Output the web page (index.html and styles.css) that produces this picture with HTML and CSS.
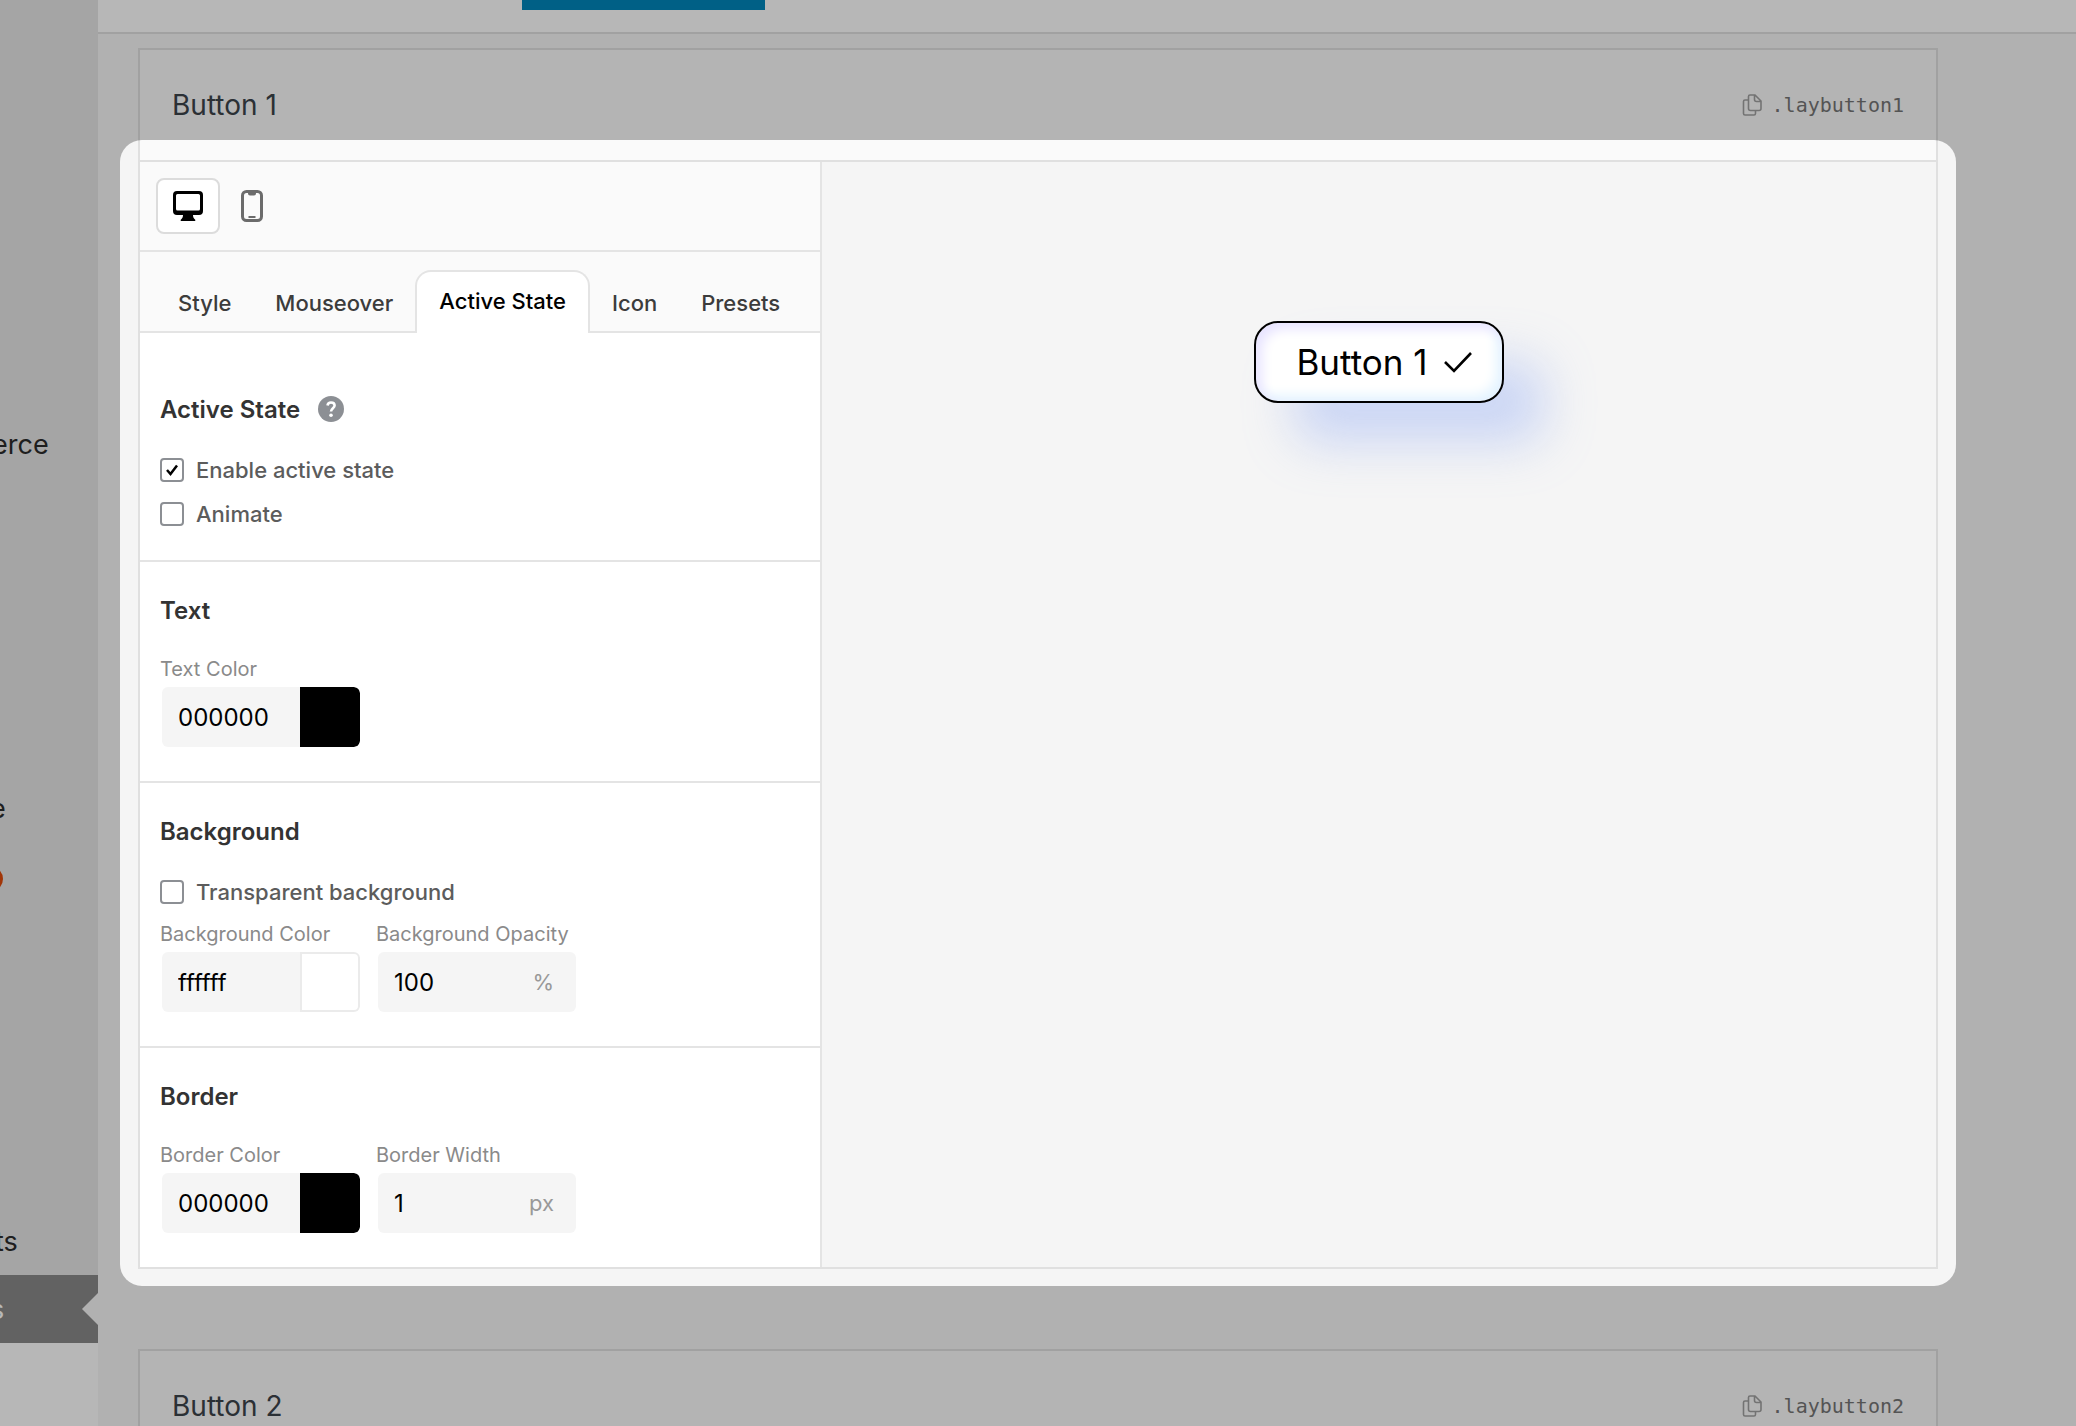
FILE: index.html
```html
<!DOCTYPE html>
<html lang="en">
<head>
  <meta charset="UTF-8">
  <meta name="viewport" content="width=device-width, initial-scale=1.0">
  <title>Buttons</title>
  <link rel="stylesheet" href="styles.css">
</head>
<body>

<svg class="sprite" aria-hidden="true">
  <symbol id="icon-copy" viewBox="0 0 20 22">
    <path stroke-width="1.600" d="M8 1h5l6 6v7.500a2 2 0 0 1-2 2H8.500a2 2 0 0 1-2-2V2.500A1.500 1.500 0 0 1 8 1zM12.500 1v4.500a2 2 0 0 0 2 2H19M6.500 6H3a1.500 1.500 0 0 0-1.500 1.500V19.500A1.500 1.500 0 0 0 3 21h9a1.500 1.500 0 0 0 1.500-1.500v-3"/>
  </symbol>
</svg>

<nav class="admin-menu">
  <div class="menu-list">
    <a class="menu-item menu-commerce" href="#">erce</a>
    <a class="menu-item menu-second" href="#">e</a>
    <span class="menu-badge"></span>
    <a class="menu-item menu-third" href="#">ts</a>
    <a class="menu-item menu-current" href="#">s</a>
  </div>
</nav>

<div class="page">
  <header class="topbar">
    <button class="save-button" type="button" aria-label="Save"></button>
  </header>

  <main class="content">
    <!-- Button 1 -->
    <section class="card">
      <div class="card-header">
        <h2>Button 1</h2>
        <button class="copy-class" type="button">
          <svg class="icon-copy"><use href="#icon-copy"/></svg>.laybutton1
        </button>
      </div>

      <div class="editor">
        <div class="controls">
          <div class="devices">
            <button class="device selected" type="button" aria-label="Desktop">
              <svg width="30" height="30" viewBox="0 0 30 30"><path fill-rule="evenodd" d="M4 0h22a4 4 0 0 1 4 4v16a4 4 0 0 1-4 4h-6c0 2 .5 3 2 4.500.800.800.300 1.500-.500 1.500h-13c-.8 0-1.300-.7-.5-1.500 1.500-1.500 2-2.500 2-4.500H4a4 4 0 0 1-4-4V4a4 4 0 0 1 4-4zm.5 3A1.500 1.500 0 0 0 3 4.500v13.500A1.500 1.500 0 0 0 4.500 19.500h21a1.500 1.500 0 0 0 1.500-1.500V4.500A1.500 1.500 0 0 0 25.500 3z"/></svg>
            </button>
            <button class="device" type="button" aria-label="Phone">
              <svg width="22" height="32" viewBox="0 0 22 32"><rect x="1.500" y="1.500" width="19" height="29" rx="4" fill="none" stroke="#6b6b6b" stroke-width="3"/><path fill="#6b6b6b" d="M7 2h8v1.500a2 2 0 0 1-2 2H9a2 2 0 0 1-2-2zM7.500 26h7v2h-7z"/></svg>
            </button>
          </div>

          <div class="tabs" role="tablist">
            <button class="tab" type="button" role="tab">Style</button>
            <button class="tab" type="button" role="tab">Mouseover</button>
            <button class="tab active" type="button" role="tab" aria-selected="true">Active State</button>
            <button class="tab" type="button" role="tab">Icon</button>
            <button class="tab" type="button" role="tab">Presets</button>
          </div>

          <div class="group group-first">
            <h3>Active State
              <svg width="26" height="26" viewBox="0 0 26 26"><circle cx="13" cy="13" r="13" fill="#8c8f94"/><path d="M9.500 9.500C9.800 7.500 11.200 6.500 13 6.500c2 0 3.600 1.200 3.600 3 0 2.600-3.600 2.800-3.600 6" fill="none" stroke="#fff" stroke-width="2.600"/><circle cx="13" cy="19.200" r="1.800" fill="#fff"/></svg>
            </h3>
            <label class="check"><input type="checkbox" checked>Enable active state</label>
            <label class="check"><input type="checkbox">Animate</label>
          </div>

          <div class="group">
            <h3>Text</h3>
            <div class="fields">
              <div class="field">
                <label for="text-color">Text Color</label>
                <div class="input-box"><input id="text-color" type="text" value="000000"><button class="swatch black" type="button" aria-label="Pick text color"></button></div>
              </div>
            </div>
          </div>

          <div class="group">
            <h3>Background</h3>
            <label class="check"><input type="checkbox">Transparent background</label>
            <div class="fields">
              <div class="field">
                <label for="bg-color">Background Color</label>
                <div class="input-box"><input id="bg-color" type="text" value="ffffff"><button class="swatch" type="button" aria-label="Pick background color"></button></div>
              </div>
              <div class="field">
                <label for="bg-opacity">Background Opacity</label>
                <div class="input-box"><input id="bg-opacity" type="text" value="100"><span class="unit">%</span></div>
              </div>
            </div>
          </div>

          <div class="group">
            <h3>Border</h3>
            <div class="fields">
              <div class="field">
                <label for="border-color">Border Color</label>
                <div class="input-box"><input id="border-color" type="text" value="000000"><button class="swatch black" type="button" aria-label="Pick border color"></button></div>
              </div>
              <div class="field">
                <label for="border-width">Border Width</label>
                <div class="input-box"><input id="border-width" type="text" value="1"><span class="unit">px</span></div>
              </div>
            </div>
          </div>
        </div>

        <div class="preview">
          <button class="laybutton" type="button">Button 1
            <svg width="28" height="22" viewBox="0 0 28 22"><path d="M1 11l9 9L27 2" fill="none" stroke="#000" stroke-width="2.600"/></svg>
          </button>
        </div>
      </div>
    </section>

    <!-- Button 2 -->
    <section class="card">
      <div class="card-header">
        <h2>Button 2</h2>
        <button class="copy-class" type="button">
          <svg class="icon-copy"><use href="#icon-copy"/></svg>.laybutton2
        </button>
      </div>
    </section>
  </main>
</div>

</body>
</html>
```
FILE: styles.css
```css
* {
  box-sizing: border-box;
}
body {
  margin: 0;
  height: 100vh;
  overflow: hidden;
  display: flex;
  background: #f5f5f5;
  font-family: Inter, sans-serif;
  color: #3c434a;
}
button, input {
  font-family: inherit;
}
button {
  cursor: pointer;
}
.sprite {
  display: none;
}

/* left admin menu */
.admin-menu {
  width: 98px;
  flex-shrink: 0;
  background: #fefefe;
}
.menu-list {
  display: flex;
  flex-direction: column;
  background: #e5e5e5;
}
.menu-item {
  height: 68px;
  line-height: 70px;
  font-size: 27px;
  color: #2c2c2c;
  text-decoration: none;
}
.menu-commerce {
  margin-top: 410px;
  margin-left: -8px;
}
.menu-second {
  margin-top: 296px;
  margin-left: -10px;
}
.menu-badge {
  width: 26px;
  height: 26px;
  margin-top: 24px;
  margin-left: -23px;
  border-radius: 50%;
  background: #e04a0a;
}
.menu-third {
  margin-top: 315px;
  margin-left: -5px;
}
.menu-current {
  position: relative;
  background: #888;
  color: #fff;
  text-indent: -10px;
}
.menu-current::after {
  content: "";
  position: absolute;
  right: 0;
  top: 18px;
  border: 16px solid transparent;
  border-left: 0;
  border-right-color: #f5f5f5;
}
.page {
  flex: 1;
  min-width: 0;
}
.topbar {
  height: 34px;
  padding-left: 424px;
  background: #fefefe;
  border-bottom: 2px solid #dfdfdf;
}
.save-button {
  display: block;
  width: 243px;
  height: 10px;
  padding: 0;
  border: 0;
  background: #0085ba;
}
.content {
  padding: 14px 138px 0 40px;
}

/* cards */
.card {
  border: 2px solid #e0e0e0;
  background: #fafafa;
  margin-bottom: 80px;
}
.card-header {
  display: flex;
  align-items: center;
  justify-content: space-between;
  height: 110px;
  padding: 0 32px;
}
.card h2 {
  margin: 0;
  font-size: 28px;
  font-weight: 400;
}
.copy-class {
  display: flex;
  align-items: center;
  gap: 10px;
  padding: 0;
  border: 0;
  background: none;
  font: 20px "DejaVu Sans Mono", monospace;
  color: #757575;
}
.icon-copy {
  width: 20px;
  height: 22px;
  fill: none;
  stroke: #a0a0a0;
}

/* everything but the open editor is dimmed */
.editor {
  position: relative;
  display: flex;
  border-top: 2px solid #e0e0e0;
}
.editor::after {
  content: "";
  position: absolute;
  z-index: 10;
  inset: -22px -20px -19px;
  border-radius: 22px;
  box-shadow: 0 0 0 3000px rgba(0, 0, 0, .28);
  pointer-events: none;
}
.controls {
  width: 682px;
  flex-shrink: 0;
  background: #fff;
  border-right: 2px solid #e4e4e4;
}
.devices {
  display: flex;
  height: 90px;
  padding: 16px;
  background: #fafafa;
  border-bottom: 2px solid #e4e4e4;
}
.device {
  display: flex;
  align-items: center;
  justify-content: center;
  width: 64px;
  height: 56px;
  padding: 0;
  border: 2px solid transparent;
  border-radius: 8px;
  background: none;
}
.device.selected {
  background: #fff;
  border-color: #dcdcdc;
}
.tabs {
  display: flex;
  align-items: flex-end;
  height: 81px;
  padding-left: 16px;
  background: #fafafa;
  box-shadow: inset 0 -2px #e4e4e4;
}
.tab {
  height: 60px;
  padding: 0 22px;
  border: 0;
  background: none;
  font-size: 22px;
  font-weight: 500;
  color: #3c3c3c;
}
.tab.active {
  height: 63px;
  padding-bottom: 4px;
  border: 2px solid #e4e4e4;
  border-bottom: 0;
  border-radius: 16px 16px 0 0;
  background: #fff;
  color: #000;
}
.group {
  padding: 35px 20px 34px;
  border-bottom: 2px solid #e4e4e4;
}
.group:last-child {
  border-bottom: 0;
}
.group-first {
  padding-top: 63px;
  padding-bottom: 21px;
}
.group h3 {
  display: flex;
  gap: 18px;
  height: 28px;
  margin: 0 0 27px;
  line-height: 28px;
  font-size: 24px;
  font-weight: 600;
  color: #333;
}
.check {
  display: flex;
  align-items: center;
  gap: 12px;
  height: 38px;
  margin-bottom: 6px;
  font-size: 22px;
  font-weight: 500;
  color: #5c5c5c;
}
.check input {
  appearance: none;
  width: 24px;
  height: 24px;
  margin: 0;
  border: 2px solid #8c8f94;
  border-radius: 4px;
  background: #fff;
}
.check input:checked {
  background: #fff url("data:image/svg+xml,%3Csvg xmlns='http://www.w3.org/2000/svg' viewBox='0 0 20 20'%3E%3Cpath d='M5 10l3.500 4L15 5.500' fill='none' stroke='%23000' stroke-width='2.500'/%3E%3C/svg%3E") center / 20px;
}
.fields {
  display: flex;
  gap: 16px;
  padding-top: 3px;
}
.field {
  width: 200px;
}
.field label {
  display: block;
  height: 32px;
  line-height: 28px;
  font-size: 20px;
  color: #8a8a8a;
  white-space: nowrap;
}
.input-box {
  display: flex;
  align-items: center;
  height: 60px;
  margin-left: 2px;
  border-radius: 6px;
  background: #f5f5f5;
  overflow: hidden;
}
.input-box input {
  flex: 1;
  min-width: 0;
  padding: 0 0 0 16px;
  border: 0;
  background: none;
  font-size: 24px;
  color: #000;
}
.swatch {
  width: 60px;
  height: 60px;
  padding: 0;
  border: 2px solid #ebebeb;
  border-radius: 0 6px 6px 0;
  background: #fff;
}
.swatch.black {
  border-color: #000;
  background: #000;
}
.unit {
  padding-right: 22px;
  font-size: 22px;
  color: #999;
}

/* live preview */
.preview {
  flex: 1;
  display: flex;
  align-items: flex-start;
  justify-content: center;
  padding-top: 159px;
  background: #f5f5f5;
}
.laybutton {
  display: flex;
  align-items: center;
  gap: 16px;
  height: 82px;
  padding: 0 30px 0 40px;
  border: 2px solid #000;
  border-radius: 24px;
  background: #fff;
  box-shadow: 40px 40px 50px rgba(146, 172, 246, .42), inset 6px 6px 12px #e8e4ff, inset -6px -6px 12px #e4f4ff;
  font-size: 35px;
  color: #000;
}
```
